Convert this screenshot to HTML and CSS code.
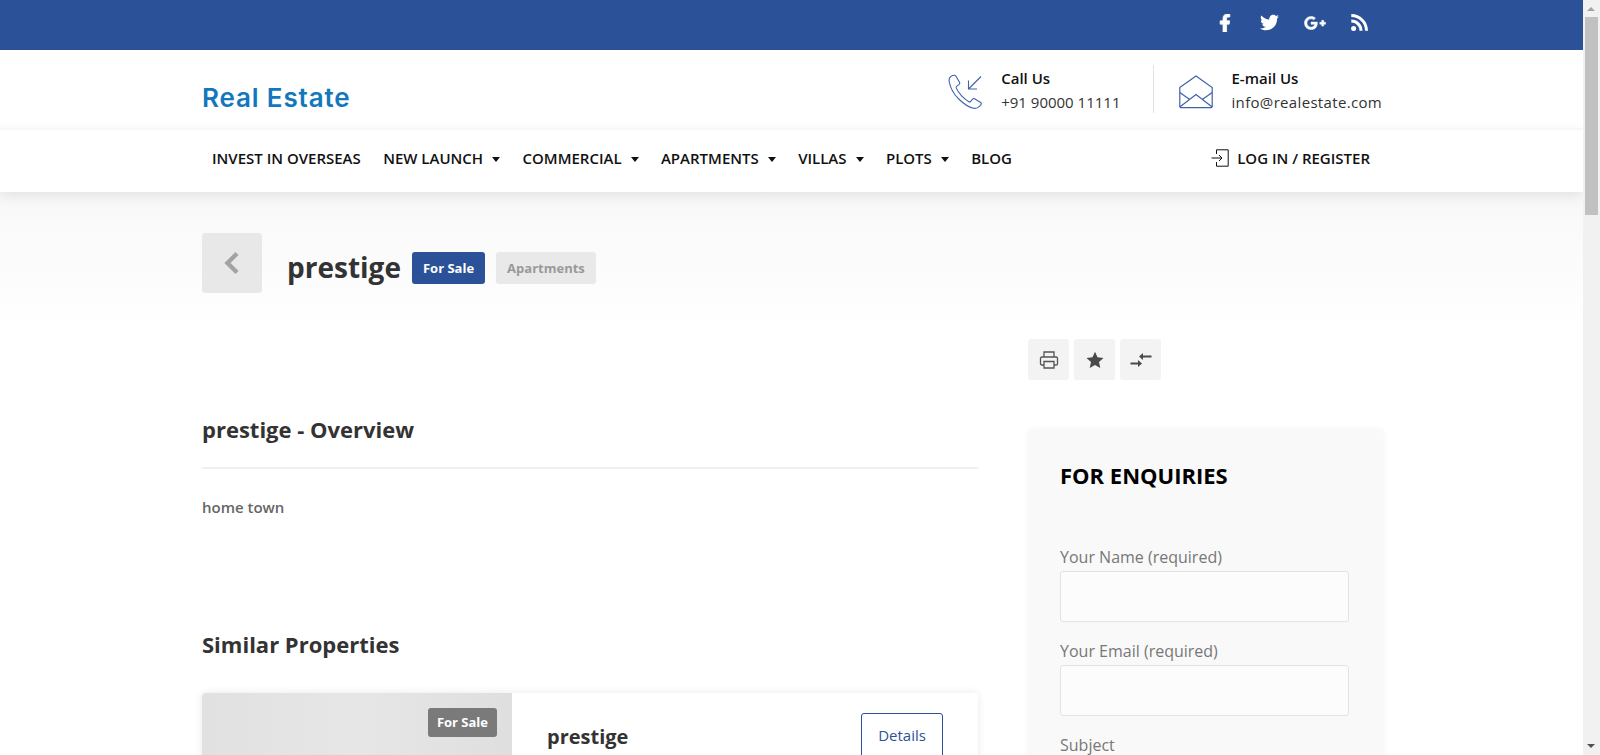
FILE: index.html
```html
<!DOCTYPE html>
<html lang="en">
<head>
<meta charset="utf-8">
<title>prestige - Real Estate</title>
<link rel="stylesheet" href="styles.css">
</head>
<body>
<div class="page">
  <div class="topbar">
    <div class="container social">
      <a class="social-icon"><svg width="14" height="18" viewBox="0 0 320 512"><path fill="#fff" stroke="#fff" stroke-width="22" d="M279.14 288l14.22-92.66h-88.91v-60.13c0-25.35 12.42-50.06 52.24-50.06h40.42V6.26S260.43 0 225.36 0c-73.22 0-121.08 44.38-121.08 124.72v70.62H22.89V288h81.39v224h100.17V288z"/></svg></a>
      <a class="social-icon"><svg width="19" height="19" viewBox="0 0 512 512"><path fill="#fff" d="M459.37 151.716c.325 4.548.325 9.097.325 13.645 0 138.72-105.583 298.558-298.558 298.558-59.452 0-114.68-17.219-161.137-47.106 8.447.974 16.568 1.299 25.34 1.299 49.055 0 94.213-16.568 130.274-44.832-46.132-.975-84.792-31.188-98.112-72.772 6.498.974 12.995 1.624 19.818 1.624 9.421 0 18.843-1.3 27.614-3.573-48.081-9.747-84.143-51.98-84.143-102.985v-1.299c13.969 7.797 30.214 12.67 47.431 13.319-28.264-18.843-46.781-51.005-46.781-87.391 0-19.492 5.197-37.36 14.294-52.954 51.655 63.675 129.3 105.258 216.365 109.807-1.624-7.797-2.599-15.918-2.599-24.04 0-57.828 46.782-104.934 104.934-104.934 30.213 0 57.502 12.67 76.67 33.137 23.715-4.548 46.456-13.32 66.599-25.34-7.798 24.366-24.366 44.833-46.132 57.827 21.117-2.273 41.584-8.122 60.426-16.243-14.292 20.791-32.161 39.308-52.628 54.253z"/></svg></a>
      <a class="social-icon"><svg width="22" height="18" viewBox="0 0 640 512"><path fill="#fff" stroke="#fff" stroke-width="14" d="M386.061 228.496c1.834 9.692 3.143 19.384 3.143 31.956C389.204 370.205 315.599 448 204.8 448c-106.084 0-192-85.915-192-192s85.916-192 192-192c51.864 0 95.083 18.859 128.611 50.292l-52.126 50.03c-14.145-13.621-39.028-29.599-76.485-29.599-65.484 0-118.92 54.221-118.92 121.277 0 67.056 53.436 121.277 118.92 121.277 75.961 0 104.513-54.745 108.965-82.773H204.8v-66.009h181.261zm185.406 6.437V179.2h-56.001v55.733h-55.733v56.001h55.733v55.733h56.001v-55.733H627.2v-56.001h-55.733z"/></svg></a>
      <a class="social-icon"><svg width="17" height="17" viewBox="0 0 17 17"><circle cx="2.600" cy="14.400" r="2.500" fill="#fff"/><path fill="none" stroke="#fff" stroke-width="3" d="M0.300 7a9.700 9.700 0 0 1 9.700 9.700M0.300 1.500a15.200 15.200 0 0 1 15.200 15.200"/></svg></a>
    </div>
  </div>

  <header class="header">
    <div class="container brand-row">
      <a class="logo">Real Estate</a>
      <div class="contacts">
        <div class="contact">
          <svg class="contact-icon" width="35" height="35" viewBox="0 0 35 35" fill="none" stroke="#3f62a8" stroke-width="1.100"><path d="M4.500 1.500c-2 .8-3.800 3-3.300 6 1.200 7.500 5 13 9.500 17.500 4.500 4.300 9.500 8.500 15 9.300 2.500.3 5.500-1 7.300-3.800.5-.8.3-1.500-.4-2l-6-3.700c-.7-.4-1.300-.3-1.800.2l-2.300 2.500c-.5.5-1 .5-1.600.2-2.800-1.500-5.500-3.800-7.500-6-2-2.300-4-5-5.200-7.800-.2-.6-.1-1.100.4-1.500l2.600-2c.6-.5.7-1.100.4-1.800L8 2.200c-.7-1.100-2-1.200-3.500-.7z"/><path d="M33 2.500 20.500 15M20.500 6.500V15H29"/></svg>
          <div class="contact-text"><strong>Call Us</strong><span>+91 90000 11111</span></div>
        </div>
        <div class="contact contact-mail">
          <svg class="contact-icon" width="34" height="34" viewBox="0 0 34 34" fill="none" stroke="#3f62a8" stroke-width="1.200"><path d="M.8 12.500 17 1l16.200 11.500V31.500c0 .7-.5 1.200-1.200 1.200H2c-.7 0-1.200-.5-1.200-1.200z"/><path d="M.8 32 17 19.500 33.200 32M.8 17.500l9.600 6.800M33.200 17.500l-9.600 6.800"/></svg>
          <div class="contact-text"><strong>E-mail Us</strong><span class="contact-email">info@realestate.com</span></div>
        </div>
      </div>
    </div>
    <div class="nav-wrap">
      <nav class="container nav">
        <a class="nav-item">INVEST IN OVERSEAS</a>
        <a class="nav-item caret">NEW LAUNCH</a>
        <a class="nav-item caret">COMMERCIAL</a>
        <a class="nav-item caret">APARTMENTS</a>
        <a class="nav-item caret">VILLAS</a>
        <a class="nav-item caret">PLOTS</a>
        <a class="nav-item">BLOG</a>
        <a class="login">
          <svg width="18" height="18" viewBox="0 0 18 18" fill="none" stroke="#111" stroke-width="1"><path d="M5.500 5V.8h11.700v16.400H5.500V13M.5 9h10.500M8 6l3 3-3 3"/></svg>
          LOG IN / REGISTER
        </a>
      </nav>
    </div>
  </header>

  <section class="title-band">
    <div class="container title-row">
      <a class="back"><svg width="16" height="24" viewBox="0 0 16 24" fill="none" stroke="#a3a3a3" stroke-width="4.400"><path d="M13 2.500 3.500 12l9.500 9.500"/></svg></a>
      <h1 class="title">prestige</h1>
      <span class="badge badge-primary">For Sale</span>
      <span class="badge badge-muted">Apartments</span>
    </div>
  </section>

  <main class="container content">
    <div class="main-col">
      <h2 class="section-title">prestige - Overview</h2>
      <p class="description">home town</p>
      <h2 class="similar-title">Similar Properties</h2>
      <article class="prop-card">
        <div class="prop-image"><span class="prop-badge">For Sale</span></div>
        <div class="prop-body">
          <h3 class="prop-name">prestige</h3>
          <a class="details">Details</a>
        </div>
      </article>
    </div>
    <aside class="side-col">
      <div class="tools">
        <button class="tool"><svg width="20" height="20" viewBox="0 0 20 20" fill="none" stroke="#555" stroke-width="1.300"><path d="M5 7V2h10v5M5 15H2.800C2 15 1.500 14.500 1.500 13.700V8.500C1.500 7.700 2 7 2.800 7h14.400c.8 0 1.300.7 1.300 1.500v5.200c0 .8-.5 1.300-1.300 1.300H15"/><path d="M5 11.500h10V18H5z"/></svg></button>
        <button class="tool"><svg width="18" height="18" viewBox="0 0 18 18"><path fill="#4a4a4a" d="M9 .8l2.500 5.500 6 .7-4.500 4 1.300 6L9 14l-5.300 3 1.300-6-4.500-4 6-.7z"/></svg></button>
        <button class="tool"><svg width="22" height="16" viewBox="0 0 22 16"><path fill="#4a4a4a" d="M21.500 3.500H13V1L9 4.500 13 8V5.500h8.500zM.5 10.500H8V8l4 3.500L8 15v-2.500H.5z"/></svg></button>
      </div>
      <form class="enquiry">
        <h2 class="enquiry-title">FOR ENQUIRIES</h2>
        <label class="field">Your Name (required)<input class="input" type="text"></label>
        <label class="field">Your Email (required)<input class="input" type="text"></label>
        <label class="field">Subject<input class="input" type="text"></label>
      </form>
    </aside>
  </main>
</div>
<div class="scrollbar"><span class="scroll-arrow"></span><span class="scroll-thumb"></span><span class="scroll-arrow scroll-arrow-down"></span></div>
</body>
</html>
```
FILE: styles.css
```css
* { box-sizing: border-box; }
html, body { margin: 0; height: 755px; overflow: hidden; }
body { display: flex; font-family: "Open Sans", sans-serif; color: #333; background: #fff; }
.page { flex: 1; min-width: 0; height: 755px; overflow: hidden; }
.container { width: 1181px; margin-left: 202px; }

.scrollbar { width: 17px; height: 755px; background: #f1f1f1; display: flex; flex-direction: column; align-items: center; flex: none; }
.scroll-arrow { height: 17px; width: 100%; position: relative; flex: none; }
.scroll-arrow::before { content: ""; position: absolute; left: 4px; top: 7px; border: 4px solid transparent; border-top: 0; border-bottom: 4px solid #a3a3a3; }
.scroll-arrow-down { margin-top: auto; }
.scroll-arrow-down::before { top: 6px; border: 4px solid transparent; border-bottom: 0; border-top: 4px solid #505050; }
.scroll-thumb { width: 13px; height: 198px; background: #c1c1c1; flex: none; }

.topbar { height: 50px; background: #2b5299; }
.social { display: flex; justify-content: flex-end; align-items: center; height: 50px; padding: 0 1px 5px 0; }
.social-icon { width: 45px; display: flex; justify-content: center; align-items: center; }

.brand-row { display: flex; justify-content: space-between; align-items: center; height: 78px; }
.logo { font-family: Inter, sans-serif; font-weight: 600; font-size: 26px; letter-spacing: .85px; color: #1277bd; padding-top: 17px; }
.contacts { display: flex; }
.contact { display: flex; align-items: center; gap: 18px; padding-right: 33px; height: 48px; }
.contact-icon { margin-top: 5px; }
.contact-mail { border-left: 1px solid #e2e2e2; padding: 0 0 0 25px; margin-right: 1px; }
.contact-text { display: flex; flex-direction: column; font-size: 15px; line-height: 24px; padding-top: 2px; }
.contact-text strong { font-weight: 600; color: #111; }
.contact-text span { color: #333; }
.contact-text .contact-email { letter-spacing: .33px; }

.nav-wrap { border-top: 2px solid #f7f7f7; box-shadow: 0 4px 12px rgba(0,0,0,.09); position: relative; background: #fff; }
.nav { display: flex; align-items: center; height: 62px; padding: 0 0 6px 10px; font-size: 15px; font-weight: 600; color: #111; }
.nav-item { margin-right: 22.4px; white-space: nowrap; }
.caret::after { content: ""; display: inline-block; margin-left: 9px; vertical-align: 2px; border: 4.5px solid transparent; border-bottom: 0; border-top: 5px solid #111; }
.login { margin-left: auto; margin-right: 13px; display: flex; align-items: center; gap: 8px; white-space: nowrap; }

.title-band { height: 140px; background: linear-gradient(#f8f8f8, #fff); }
.title-row { display: flex; align-items: flex-start; padding-top: 41px; }
.back { width: 60px; height: 60px; background: #e8e8e8; border-radius: 3px; display: flex; align-items: center; justify-content: center; margin-right: 25px; }
.title { margin: 4px 11px 0 0; font-size: 28px; font-weight: 700; color: #333; line-height: 60px; }
.badge { height: 32px; line-height: 32px; padding: 0 11px; border-radius: 3px; font-size: 13px; font-weight: 700; margin: 19px 11px 0 0; }
.badge-primary { background: #2b5299; color: #fff; }
.badge-muted { background: #e9e9e9; color: #999; }

.content { display: flex; align-items: flex-start; }
.main-col { width: 776px; }
.section-title { margin: 82px 0 0; font-size: 22px; font-weight: 700; line-height: 30px; color: #333; padding-bottom: 23px; border-bottom: 2px solid #f0f0f0; }
.description { margin: 26px 0 0; font-size: 15px; font-weight: 600; line-height: 24px; color: #666; }
.similar-title { margin: 110px 0 0; font-size: 22px; font-weight: 700; line-height: 30px; color: #333; }
.prop-card { margin-top: 34px; display: flex; height: 200px; background: #fff; border-radius: 4px; box-shadow: 0 0 8px rgba(0,0,0,.09); overflow: hidden; }
.prop-image { width: 310px; background: linear-gradient(90deg, #e1e1e1, #e6e6e6 50%, #dfdfdf); display: flex; justify-content: flex-end; align-items: flex-start; padding: 15px 15px 0 0; }
.prop-badge { background: #7a7a7a; color: #fff; font-size: 13px; font-weight: 700; height: 29px; line-height: 29px; padding: 0 9px; border-radius: 3px; }
.prop-body { flex: 1; display: flex; justify-content: space-between; align-items: flex-start; padding: 20px 35px 0 35px; }
.prop-name { margin: 9px 0 0; font-size: 20px; font-weight: 700; line-height: 30px; color: #333; }
.details { width: 82px; height: 60px; border: 1px solid #2b5299; border-radius: 3px; color: #2b5299; font-size: 15px; text-align: center; line-height: 42px; }

.side-col { width: 355px; margin-left: 50px; padding-top: 7px; }
.tools { display: flex; gap: 5px; }
.tool { width: 41px; height: 41px; padding: 0; border: 0; border-radius: 3px; background: #f3f3f3; display: flex; align-items: center; justify-content: center; }
.enquiry { margin-top: 49px; background: #f9f9f9; border-radius: 6px; box-shadow: 0 0 6px rgba(0,0,0,.05); padding: 30px 34px 0 32px; height: 500px; }
.enquiry-title { margin: 0 0 54px; font-size: 22px; font-weight: 700; line-height: 32px; color: #000; }
.field { display: block; margin-bottom: 17px; font-size: 16px; line-height: 24px; color: #777; }
.input { display: block; width: 100%; height: 51px; margin-top: 2px; background: #fcfcfc; border: 1px solid #e3e3e3; border-radius: 3px; }
```
